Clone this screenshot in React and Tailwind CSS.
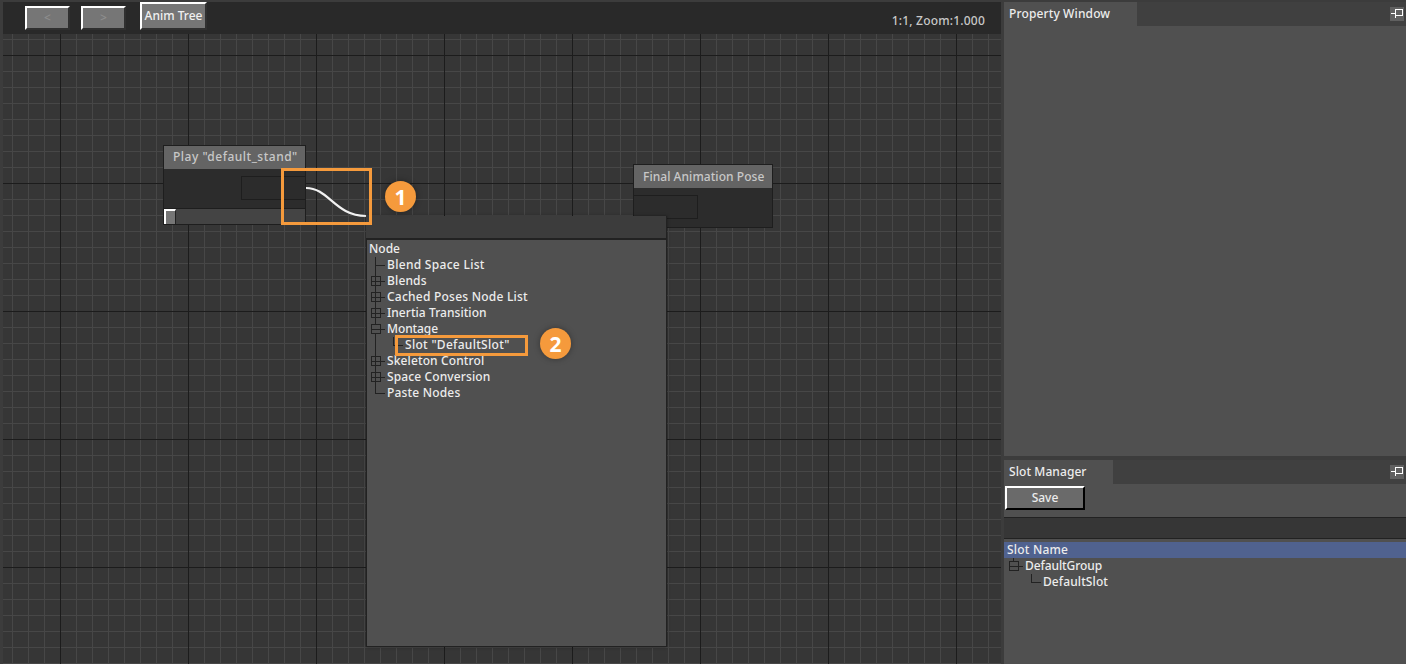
import React from "react";

function Glyph({ kind = "leaf", top = true, bottom = true }) {
  const c = "#222222";
  return (
    <svg width="18" height="16" viewBox="0 0 18 16" className="shrink-0 block" shapeRendering="crispEdges">
      {top && <line x1="6.5" y1="0" x2="6.5" y2={kind === "leaf" ? 8 : 3} stroke={c} />}
      {bottom && <line x1="6.5" y1={kind === "leaf" ? 8 : 13} x2="6.5" y2="16" stroke={c} />}
      {kind === "leaf" ? (
        <line x1="6" y1="8.5" x2="16" y2="8.5" stroke={c} />
      ) : (
        <>
          <rect x="2.5" y="3.5" width="9" height="9" fill="none" stroke={c} />
          <line x1="2" y1="8.5" x2="16" y2="8.5" stroke={c} />
          {kind === "plus" && <line x1="6.5" y1="3" x2="6.5" y2="13" stroke={c} />}
        </>
      )}
    </svg>
  );
}

function Spine() {
  return (
    <svg width="18" height="16" viewBox="0 0 18 16" className="shrink-0 block" shapeRendering="crispEdges">
      <line x1="6.5" y1="0" x2="6.5" y2="16" stroke="#222222" />
    </svg>
  );
}

function Row({ children, kind, top, bottom, spine, track = "" }) {
  return (
    <div className="flex h-4 items-center whitespace-nowrap leading-4">
      {spine && <Spine />}
      <Glyph kind={kind} top={top} bottom={bottom} />
      <span className={track}>{children}</span>
    </div>
  );
}

function Pin() {
  return (
    <div className="w-[14px] h-[14px] bg-[#606060] flex items-center justify-center">
      <svg width="12" height="10" viewBox="0 0 12 10" shapeRendering="crispEdges">
        <path d="M0 4.5H5M4.5 0V9M4.5 0.5H11.5V6.5H4.5" fill="none" stroke="#ffffff" />
      </svg>
    </div>
  );
}

function ToolButton({ children, className }) {
  return (
    <div className={"flex items-center justify-center bg-[#767676] border-t-2 border-l-2 border-t-white border-l-white border-r-2 border-b-2 border-r-[#303030] border-b-[#303030] " + className}>
      {children}
    </div>
  );
}

function Badge({ n, className }) {
  return (
    <div className={"absolute w-[31px] h-[31px] rounded-full bg-[#f59a3c] text-white flex items-center justify-center text-[21px] font-bold shadow-[0_0_6px_rgba(0,0,0,0.35)] font-['Open_Sans',sans-serif] " + className}>
      {n}
    </div>
  );
}

export default function App() {
  return (
    <div className="w-[1406px] h-[664px] overflow-hidden flex bg-[#3c3c3c] pt-[2px] pl-[3px] text-xs font-medium text-[#ececec] font-['Noto_Sans',sans-serif]">
      <div className="w-[998px] flex flex-col">
        <div className="h-[32px] bg-[#292929] flex items-start relative">
          <ToolButton className="w-[45px] h-[24px] mt-1 ml-[22px] text-[#8e8e8e]">&lt;</ToolButton>
          <ToolButton className="w-[45px] h-[24px] mt-1 ml-[11px] text-[#8e8e8e]">&gt;</ToolButton>
          <ToolButton className="w-[67px] h-[28px] ml-[14px] text-[#f0f0f0] border-b-[#292929] border-r-[#292929]">Anim Tree</ToolButton>
          <div className="ml-auto mr-[16px] mt-[11px] leading-4 text-[#c8c8c8] tracking-[0.2px]">1:1, Zoom:1.000</div>
        </div>

        <div className="flex-1 relative bg-[#363636] bg-[linear-gradient(to_right,#1c1c1c_1px,transparent_1px),linear-gradient(to_bottom,#1c1c1c_1px,transparent_1px),linear-gradient(to_right,#474747_1px,transparent_1px),linear-gradient(to_bottom,#474747_1px,transparent_1px)] bg-[size:128px_128px,128px_128px,16px_16px,16px_16px] bg-[position:57px_21px,57px_21px,9px_5px,9px_5px]">
          {/* Play node */}
          <div className="absolute left-[160px] top-[111px] w-[143px] h-[80px] border border-[#1e1e1e] bg-[#2c2c2c] flex flex-col">
            <div className="h-[23px] bg-[#646464] text-[#c8c8c8] px-[9px] leading-[22px] whitespace-nowrap tracking-[0.5px]">Play "default_stand"</div>
            <div className="flex-1 flex justify-end items-start pt-[7px]">
              <div className="w-[64px] h-[24px] border border-[#1e1e1e] border-r-0" />
            </div>
            <div className="h-[16px] border-t border-[#1e1e1e] bg-[#444444]">
              <div className="w-[12px] h-[15px] bg-[#767676] border-t-2 border-l-2 border-white border-r border-r-[#222222]" />
            </div>
          </div>

          {/* Final node */}
          <div className="absolute left-[630px] top-[130px] w-[140px] h-[64px] border border-[#1e1e1e] bg-[#2c2c2c] flex flex-col">
            <div className="h-[23px] bg-[#646464] text-[#c8c8c8] px-[9px] leading-[24px] whitespace-nowrap tracking-[0.05px]">Final Animation Pose</div>
            <div className="flex-1 pt-[7px]">
              <div className="w-[64px] h-[24px] border border-[#1e1e1e] border-l-0" />
            </div>
          </div>

          {/* Curve */}
          <svg className="absolute left-[300px] top-[150px]" width="70" height="36" viewBox="0 0 70 36" fill="none">
            <path d="M3 4C26 4 32 32 63 32" stroke="#f2f2f2" strokeWidth="2.2" />
          </svg>

          {/* Popup */}
          <div className="absolute left-[363px] top-[182px] w-[301px] h-[431px] bg-[#3c3c3c] border-r border-b border-[#222222] flex flex-col shadow-[0_0_3px_rgba(0,0,0,0.4)]">
            <div className="h-[23px] border-b border-[#222222]" />
            <div className="flex-1 bg-[#505050] border-t border-l border-[#222222] pl-[2px] pt-[1px]">
              <div className="h-4 leading-4">Node</div>
              <Row track="tracking-[0.3px]">Blend Space List</Row>
              <Row kind="plus" track="tracking-[0.15px]">Blends</Row>
              <Row kind="plus" track="tracking-[0.23px]">Cached Poses Node List</Row>
              <Row kind="plus" track="tracking-[0.05px]">Inertia Transition</Row>
              <Row kind="minus" track="tracking-[-0.1px]">Montage</Row>
              <Row spine bottom={false} track="tracking-[0.3px]">Slot "DefaultSlot"</Row>
              <Row kind="plus" track="tracking-[0.12px]">Skeleton Control</Row>
              <Row kind="plus" track="tracking-[0.12px]">Space Conversion</Row>
              <Row bottom={false} track="tracking-[0.18px]">Paste Nodes</Row>
            </div>
          </div>

          {/* Annotations */}
          <div className="absolute left-[278px] top-[134px] w-[91px] h-[57px] border-[3px] border-[#f59a3c]" />
          <Badge n="1" className="left-[382px] top-[147px]" />
          <div className="absolute left-[392px] top-[301px] w-[133px] h-[21px] border-[3px] border-[#f59a3c]" />
          <Badge n="2" className="left-[537px] top-[294px]" />
        </div>
      </div>

      <div className="flex-1 ml-[3px] flex flex-col">
        <div className="h-[24px] bg-[#404040] flex items-center justify-between pr-[2px]">
          <div className="w-[133px] h-full bg-[#505050] pl-[5px] leading-[24px] tracking-[0.13px]">Property Window</div>
          <Pin />
        </div>
        <div className="h-[430px] bg-[#505050]" />
        <div className="h-[4px]" />
        <div className="h-[24px] bg-[#404040] flex items-center justify-between pr-[2px]">
          <div className="w-[109px] h-full bg-[#505050] pl-[5px] leading-[24px] tracking-[0.08px]">Slot Manager</div>
          <Pin />
        </div>
        <div className="flex-1 bg-[#505050] flex flex-col">
          <div className="mt-[2px] ml-[1px] w-[80px] h-[24px] bg-[#6a6a6a] border-t-2 border-l-2 border-t-white border-l-white border-r-2 border-b-2 border-r-black border-b-black flex items-center justify-center">Save</div>
          <div className="mt-[7px] h-[22px] bg-[#363636] border-t border-b border-[#222222]" />
          <div className="mt-[3px] h-4 bg-[#50628f] pl-[3px] leading-4 tracking-[0.2px]">Slot Name</div>
          <div className="pl-[3px]">
            <Row kind="minus" bottom={false} track="tracking-[-0.08px]">DefaultGroup</Row>
            <div className="pl-[18px]">
              <Row bottom={false} track="tracking-[0.1px]">DefaultSlot</Row>
            </div>
          </div>
        </div>
      </div>
    </div>
  );
}
